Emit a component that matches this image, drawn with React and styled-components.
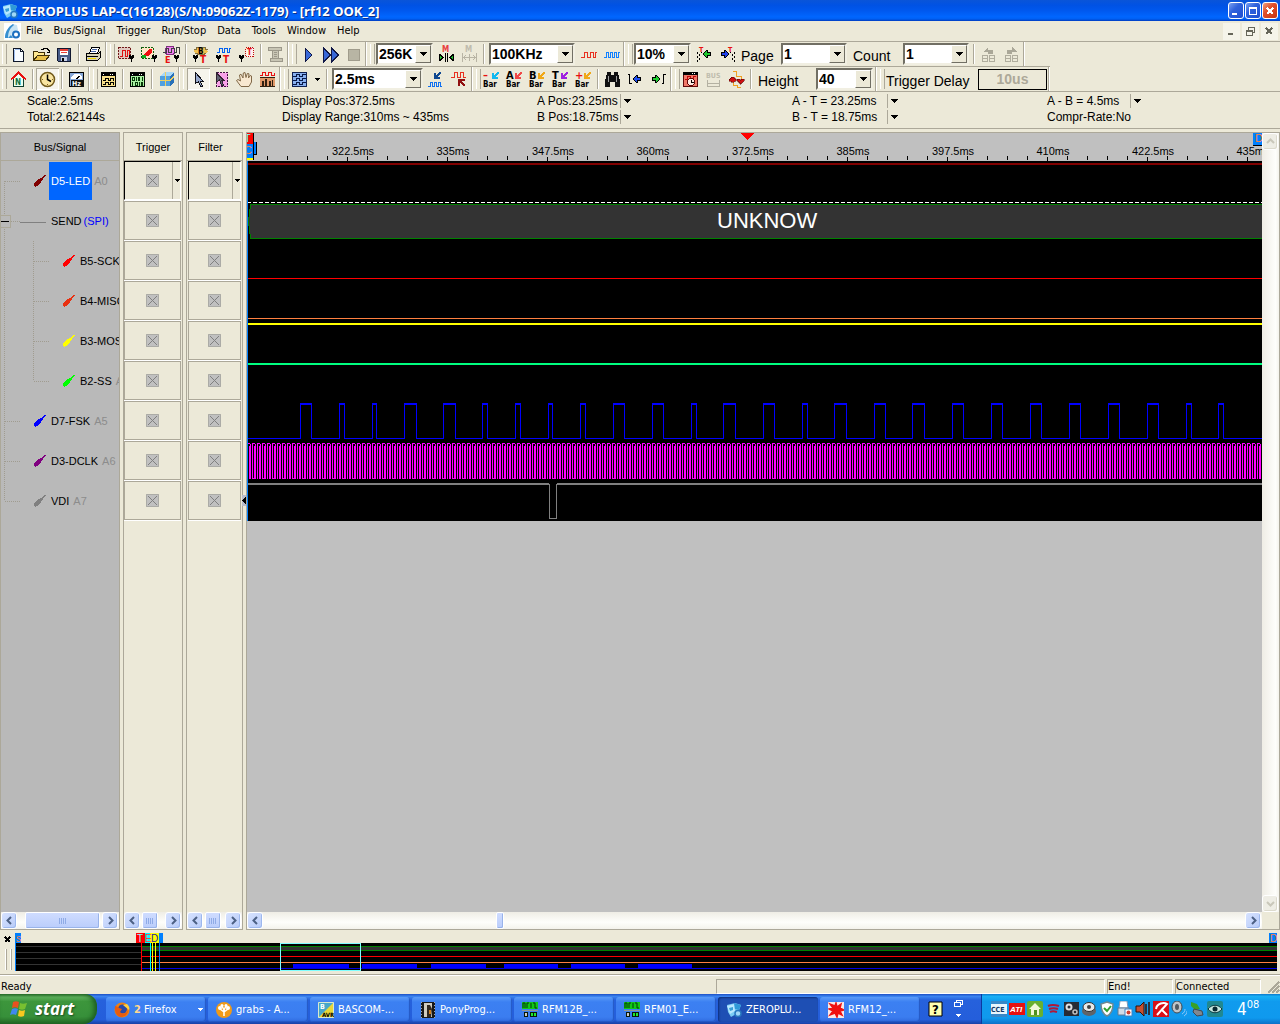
import React from 'react'
import styled, { createGlobalStyle, css } from 'styled-components'

const ui = '"DejaVu Sans Condensed", Tahoma, sans-serif'
const sans = '"Liberation Sans", Arial, sans-serif'

const face = '#ece9d8'
const shadow = '#aca899'

const GlobalStyle = createGlobalStyle`
  * { box-sizing: border-box; }
  body {
    margin: 0;
    background: ${face};
    color: #000;
    font-family: ${ui};
    font-size: 11px;
    overflow: hidden;
  }
  button { font: inherit; color: inherit; padding: 0; margin: 0; border: 0; background: none; }
  svg { display: block; flex: none; }
`

const Screen = styled.div`
  display: flex;
  flex-direction: column;
  height: 100vh;
`

/* ---------- title and menu ---------- */

const TitleBar = styled.header`
  display: flex;
  align-items: center;
  height: 21px;
  padding: 0 2px;
  background: linear-gradient(#0a55d8, #0052e4 25%, #0058ee 50%, #0066ff 80%, #0060f4 90%, #003cc0);
  color: #fff;
`
const Title = styled.h1`
  flex: 1;
  margin: 0 0 0 4px;
  font-family: "Open Sans", "Noto Sans", sans-serif;
  font-size: 13px;
  font-weight: 700;
  line-height: 20px;
  white-space: nowrap;
  text-shadow: 1px 1px 0 #0a2f8a;
`
const CaptionButton = styled.button`
  display: flex;
  align-items: center;
  justify-content: center;
  width: 16px;
  height: 17px;
  margin-left: 1px;
  border: 1px solid #fff;
  border-radius: 3px;
  background: ${p => p.$close ? 'linear-gradient(135deg, #f0a080, #e0502c 40%, #c83410)' : 'linear-gradient(135deg, #7ba0f0, #2f62dc 40%, #1f4fd0)'};
`
const MenuBar = styled.nav`
  display: flex;
  align-items: center;
  height: 20px;
  padding: 0 2px 0 4px;
`
const MenuItem = styled.button`
  height: 18px;
  padding: 0 6px 0 5px;
  line-height: 18px;
`
const Spacer = styled.span`
  flex: 1;
`
const ChildButton = styled.button`
  display: flex;
  align-items: center;
  justify-content: center;
  width: 17px;
  height: 17px;
  margin-left: 2px;
  background: #f5f4ea;
`

/* ---------- tool bars ---------- */

const ToolBar = styled.div`
  display: flex;
  align-items: center;
  width: ${p => p.$fit ? 'fit-content' : 'auto'};
  height: 25px;
  border-top: 1px solid ${shadow};
  font-family: ${sans};
  font-size: 14px;
`
const Grip = styled.span`
  align-self: stretch;
  width: ${p => p.$first ? '7px' : '9px'};
  border-left: ${p => p.$first ? '0' : `1px solid ${shadow}`};
  box-shadow: ${p => p.$first ? 'none' : 'inset 1px 0 #fff'};
  &::after {
    content: '';
    display: block;
    width: 3px;
    height: 20px;
    margin: 2px 0 0 ${p => p.$first ? '2px' : '4px'};
    border-left: 1px solid #fff;
    border-right: 1px solid ${shadow};
  }
`
const Divider = styled.span`
  width: 2px;
  height: 20px;
  margin: 0 2px;
  border-left: 1px solid ${shadow};
  border-right: 1px solid #fff;
`
const EndLine = styled.span`
  align-self: stretch;
  width: 2px;
  border-left: 1px solid ${shadow};
  border-right: 1px solid #fff;
`
const Tool = styled.button`
  display: flex;
  align-items: center;
  justify-content: center;
  flex: none;
  width: ${p => p.$thin ? '13px' : '23px'};
  height: 22px;
  ${p => p.$pressed && css`
    background: #f6f4ec;
    box-shadow: inset 1px 1px ${shadow}, inset -1px -1px #fff;
  `}
`
const Combo = styled.label`
  position: relative;
  flex: none;
  width: ${p => p.$width}px;
  height: 22px;
  margin: 0 2px;
`
const ComboSelect = styled.select`
  appearance: none;
  display: block;
  width: 100%;
  height: 22px;
  padding: 0 0 0 1px;
  border: 2px solid;
  border-color: #716f64 #f1efe2 #f1efe2 #716f64;
  border-radius: 0;
  background: #fff;
  color: #000;
  font: bold 14px/18px ${sans};
`
const ComboArrow = styled.span`
  position: absolute;
  top: 2px;
  right: 2px;
  display: flex;
  align-items: center;
  justify-content: center;
  width: 16px;
  height: 18px;
  background: ${face};
  border: 1px solid;
  border-color: #fff #716f64 #716f64 #fff;
  pointer-events: none;
`
const ToolText = styled.span`
  width: ${p => p.$width}px;
  padding: 3px 0 0 ${p => p.$pad || 2}px;
  line-height: 18px;
  white-space: nowrap;
`
const DelayInput = styled.input`
  width: 69px;
  height: 21px;
  margin: 0 1px 0 6px;
  padding: 0;
  border: 1px solid #000;
  background: ${face};
  color: ${shadow};
  font: bold 14px/18px ${sans};
  text-align: center;
`

const Info = styled.section`
  display: grid;
  grid-template-columns: repeat(5, 1fr);
  height: 38px;
  padding-right: 5px;
  border-top: 1px solid ${shadow};
  border-bottom: 1px solid ${shadow};
  font-family: ${sans};
  font-size: 12px;
  line-height: 16px;
`
const InfoCell = styled.div`
  padding: 1px 0 0 27px;
`
const InfoLine = styled.div`
  display: flex;
  align-items: center;
  white-space: nowrap;
`
const InfoText = styled.span`
  width: ${p => p.$width ? `${p.$width}px` : 'auto'};
`
const InfoDrop = styled.button`
  height: 14px;
  padding: 0 3px;
  border-left: 1px solid ${shadow};
`

/* ---------- panes ---------- */

const Workspace = styled.main`
  position: relative;
  flex: 1;
  display: grid;
  grid-template-columns: 120px 60px 57px minmax(0, 1fr);
  gap: 3px;
  min-height: 0;
  padding-top: 3px;
`
const Pane = styled.section`
  display: flex;
  flex-direction: column;
  min-width: 0;
  border: 1px solid ${shadow};
  background: ${p => p.$bg || face};
  overflow: hidden;
`
const PaneHeader = styled.h2`
  height: 28px;
  margin: 0;
  padding-right: ${p => p.$shift ? '8px' : '0'};
  border-bottom: 1px solid ${shadow};
  font-family: ${sans};
  font-size: 11px;
  font-weight: normal;
  line-height: 28px;
  text-align: center;
`
const PaneBody = styled.div`
  position: relative;
  flex: 1;
  min-height: 0;
`
const TreeLines = styled.svg`
  position: absolute;
  left: 0;
  top: 0;
`
const SignalRow = styled.div`
  position: relative;
  display: flex;
  align-items: center;
  height: 40px;
  padding-left: ${p => p.$level ? '62px' : '33px'};
  font-family: ${sans};
  font-size: 11px;
  white-space: nowrap;
`
const SignalName = styled.span`
  flex: none;
  margin-left: 3px;
  padding: 0 2px;
  line-height: 38px;
  ${p => p.$selected && css`
    background: #0066ff;
    color: #fff;
  `}
`
const Channel = styled.span`
  flex: none;
  padding-left: 2px;
  color: #8c8c8c;
`
const Protocol = styled.span`
  color: #0000ff;
`
const Cell = styled.button`
  display: flex;
  align-items: center;
  justify-content: center;
  position: relative;
  width: ${p => p.$width}px;
  height: 39px;
  margin: 0 1px 1px ${p => p.$inset ? '1px' : '0'};
  border: 1px solid ${shadow};
  box-shadow: 0 1px #fff;
  ${p => p.$active && css`
    border-color: #000 #fff #fff #000;
  `}
`
const CellDrop = styled.span`
  position: absolute;
  right: 0;
  top: 0;
  bottom: 0;
  display: flex;
  align-items: center;
  justify-content: flex-end;
  width: 8px;
  border-left: 1px solid ${shadow};
`

const ScrollBar = styled.div`
  display: flex;
  flex: 1;
  height: 17px;
  padding-right: 1px;
  background: linear-gradient(#efede5, #fefefb 60%, #f4f3ec);
`
const VScrollBar = styled.div`
  display: flex;
  flex-direction: column;
  justify-content: space-between;
  width: 17px;
  background: linear-gradient(90deg, #efede5, #fefefb 80%, #f4f3ec);
`
const ScrollButton = styled.button`
  flex: none;
  display: flex;
  align-items: center;
  justify-content: center;
  width: 16px;
  height: 17px;
  border: 1px solid #fff;
  border-radius: 3px;
  background: ${p => p.$off ? '#eeede5' : 'linear-gradient(135deg, #d6e2ff, #b8cbf8)'};
  box-shadow: inset -1px -1px ${p => p.$off ? '#dcdacd' : '#9db8ee'};
`
const ScrollThumb = styled.div`
  flex: none;
  display: flex;
  align-items: center;
  justify-content: center;
  width: ${p => p.$width}px;
  height: 17px;
  margin-left: ${p => p.$offset};
  border: 1px solid #fff;
  border-radius: 2px;
  background: linear-gradient(#cfdcff, #bacdfb);
  box-shadow: inset -1px -1px #98b3ea;
`
const ScrollRow = styled.div`
  display: flex;
  flex: none;
  height: 17px;
`
const Corner = styled.span`
  width: 17px;
  background: ${face};
`
const WaveArea = styled.div`
  display: flex;
  flex: 1;
  min-height: 0;
`
const WaveCanvas = styled.div`
  flex: 1;
  min-width: 0;
  overflow: hidden;
`
const SplitMark = styled.span`
  position: absolute;
  left: 242px;
  top: 366px;
  width: 4px;
  height: 11px;
  background: #b8bccc;
`

/* ---------- overview and status ---------- */

const Overview = styled.section`
  display: flex;
  flex: none;
  height: 45px;
  padding: 3px 3px 0 0;
  border-bottom: 1px solid ${shadow};
`
const OverviewHandle = styled.div`
  display: flex;
  flex-direction: column;
  align-items: center;
  gap: 6px;
  width: 15px;
  padding-top: 3px;
`
const HandleGrip = styled.span`
  width: 6px;
  height: 21px;
  border: solid #fff;
  border-width: 0 1px;
  background: ${face};
  box-shadow: 1px 0 ${shadow}, inset 1px 0 ${shadow};
`
const OverviewChart = styled.div`
  flex: 1;
  min-width: 0;
  overflow: hidden;
`
const StatusBar = styled.footer`
  display: flex;
  flex: none;
  align-items: stretch;
  gap: 2px;
  height: 19px;
  padding: 3px 0 0 1px;
  border-top: 1px solid #fff;
`
const StatusText = styled.span`
  flex: 716;
  line-height: 15px;
`
const StatusPane = styled.span`
  flex: ${p => p.$grow ? '388' : 'none'};
  width: ${p => p.$width ? `${p.$width}px` : 'auto'};
  border: 1px solid;
  border-color: ${shadow} #fff #fff ${shadow};
  line-height: 14px;
`

/* ---------- task bar ---------- */

const TaskBar = styled.footer`
  display: flex;
  flex: none;
  align-items: stretch;
  height: 30px;
  background: linear-gradient(#1c4fc4, #3b84f0 8%, #2661dc 20%, #245edb 85%, #1941a5);
  color: #fff;
`
const StartButton = styled.button`
  display: flex;
  flex: none;
  align-items: center;
  gap: 6px;
  width: 97px;
  margin-right: 9px;
  padding-left: 10px;
  border-radius: 0 12px 14px 0;
  background: linear-gradient(#2f7a30, #5fb25d 10%, #3d963c 25%, #37903a 75%, #256b27);
  box-shadow: inset -3px 0 5px #1c5c20;
  font-family: "Open Sans", sans-serif;
  font-size: 17px;
  font-weight: bold;
  font-style: italic;
  line-height: 26px;
  text-shadow: 1px 1px 2px #1a4a1c;
`
const TaskButton = styled.button`
  display: flex;
  flex: none;
  align-items: center;
  gap: 4px;
  width: 100px;
  height: 25px;
  margin: 3px 2px 0 0;
  padding: 0 3px 0 8px;
  border-radius: 3px;
  background: ${p => p.$active ? '#1e4fb4' : 'linear-gradient(#5a9bf8, #3c80f2 20%, #3b7df0 80%, #2f6ade)'};
  box-shadow: ${p => p.$active ? 'inset 1px 1px 2px #0e2f7c' : 'inset -1px -1px 1px #2458c4'};
  white-space: nowrap;
`
const TaskCount = styled.b`
  margin-right: -1px;
  color: #ffd890;
`
const LangArea = styled.div`
  display: flex;
  flex: 1;
  align-items: center;
  gap: 10px;
  padding-left: 6px;
`
const Tray = styled.div`
  display: flex;
  flex: none;
  align-items: center;
  gap: 2px;
  width: 299px;
  padding-left: 9px;
  border-left: 1px solid #0b3aa0;
  background: linear-gradient(#0d78cc, #19b0f6 8%, #109bee 25%, #0f99ee 80%, #0c70c8);
`
const Clock = styled.time`
  display: flex;
  margin-left: 12px;
  font-size: 17px;
  line-height: 18px;
`
const ClockMinutes = styled.span`
  font-size: 11px;
  line-height: 10px;
`

/* ---------- drawings ---------- */

const Ico = ({ children, w = 19, h = 20 }) => (
  <svg width={w} height={h} viewBox={`0 0 ${w} ${h}`} shapeRendering="crispEdges" fill="none" aria-hidden="true">{children}</svg>
)
const Glyph = ({ x, y, c = '#000', s = 8, children }) => (
  <text x={x} y={y} fill={c} fontSize={s} fontWeight="bold" fontFamily="DejaVu Sans Condensed">{children}</text>
)
const Down = ({ c = '#000' }) => (
  <svg width="7" height="4" viewBox="0 0 7 4" shapeRendering="crispEdges" aria-hidden="true"><path d="M0 0h7v1h-1v1h-1v1h-1v1h-1v-1h-1v-1h-1v-1h-1z" fill={c} /></svg>
)
const SmallDown = () => (
  <svg width="5" height="3" viewBox="0 0 5 3" shapeRendering="crispEdges" aria-hidden="true"><path d="M0 0h5v1h-1v1h-1v1h-1v-1h-1v-1h-1z" /></svg>
)
const Clip = ({ x, y = 11 }) => (
  <path d={`M${x} ${y}h2v1h1v-1h2v3h-1v1h-1v3h-1v-3h-1v-1h-1z`} fill="#000" />
)
// arrow head filling a 7x7 corner, pointing down and left
const CornerArrow = ({ x, y, c }) => (
  <path d={`M${x} ${y}h2v2h1v-1h1v-1h1v-1h2v2h-1v1h-1v1h-1v1h2v2h-6z`} fill={c} />
)
const BarIcon = ({ mark, c, a }) => (
  <Ico>
    <Glyph x={1} y={10} c={c} s={11}>{mark}</Glyph>
    <CornerArrow x={10} y={4} c={a} />
    <Glyph x={1} y={18} s={8}>Bar</Glyph>
  </Ico>
)
const ArrowLeft = ({ x, y, c }) => (
  <>
    <path d={`M${x} ${y + 4}h1v-1h1v-1h1v-1h1v-1h2v2h3v4h-3v2h-2v-1h-1v-1h-1v-1h-1v-1h-1z`} fill="#000" />
    <path d={`M${x + 1} ${y + 4}h1v-1h1v-1h1v-1h1v2h3v2h-3v2h-1v-1h-1v-1h-1v-1h-1z`} fill={c} />
  </>
)
const ArrowRight = ({ x, y, c }) => (
  <g transform={`translate(${x + 9} 0) scale(-1 1)`}><ArrowLeft x={0} y={y} c={c} /></g>
)

const icons = {
  file: <Ico><path d="M4.500 4.500h7l3 3v10h-10z" fill="#f8fcff" stroke="#101828" /><path d="M11.500 4.500v3h3" stroke="#101828" /><path d="M5.500 5.500v11M5.500 5.500h5" stroke="#a0c0f0" /></Ico>,
  open: <Ico><path d="M1.500 16.500v-9h4l1 1h6v3" fill="#ffe890" stroke="#403008" /><path d="M1.500 16.500l4-5h12l-4 5z" fill="#e8c048" stroke="#403008" /><path d="M9 5.500h2l1-1h3l2 2v2M15 8.500h3" stroke="#000" /></Ico>,
  save: <Ico><path d="M2.500 4.500h13v13h-12l-1-1z" fill="#485c88" stroke="#101830" /><path d="M5 5h8v6h-8z" fill="#fff" /><path d="M5 5h8v2h-8zM6 8h6v1h-6z" fill="#e84038" /><path d="M6 13h6v4h-6z" fill="#c8d0e8" /><path d="M7 14h2v3h-2z" fill="#000" /></Ico>,
  print: <Ico><path d="M5.500 9.500l2-6h8l-2 6z" fill="#fff" stroke="#000" /><path d="M8 5.500h5M7 7.500h5" stroke="#4868a8" /><path d="M2.500 9.500h12l2-2v6l-3 3h-11z" fill="#d8d4b8" stroke="#000" /><path d="M2 12.500h12M3 16.500h10" stroke="#000" strokeWidth="1" /><path d="M4 14h8v1h-8z" fill="#f0d800" /></Ico>,
  sample: <Ico><path d="M2 3h13v12h-13z" fill="#e0c8c0" /><path d="M2.500 3.500h12v11h-12z" stroke="#701818" strokeDasharray="2 1" /><path d="M4 12.500h2v-6h3v6h2v-6h2v6" stroke="#e01010" /><Clip x={13} /></Ico>,
  property: <Ico><path d="M2 3h13v12h-13z" fill="#ffe8c8" /><path d="M2.500 3.500h12v11h-12z" stroke="#106010" strokeDasharray="2 1" /><path d="M5 11l2-3l4-3h2v3l-4 4h-4z" fill="#f01010" /><path d="M3 11h4v3h-4z" fill="#10b020" /><Clip x={13} /></Ico>,
  bus: <Ico><path d="M4 2h7v2h1v5h-1v1h-7v-1h-1v-5h1z" fill="#f080f0" stroke="#803080" /><path d="M1 8.500h3v-4h2v4h3v-4h3v4h2v-5h3v6" stroke="#404040" /><Glyph x={3} y={19} c="#e81010" s={9}>E</Glyph><Clip x={12} /></Ico>,
  eye: <Ico><path d="M2 7l4-3h7l4 3l-4 4h-7z" fill="#f0c050" /><path d="M3 5.500h2v-2h9v2h3M4 9.500h2v1h7v-1h2" stroke="#807040" /><Glyph x={7} y={10}>B</Glyph><Clip x={2} /><Glyph x={9} y={19} c="#e81010" s={10}>T</Glyph></Ico>,
  trigWave: <Ico><path d="M3 8.500h2v-4h3v4h2v-4h3v4h2v-4h2" stroke="#0060f0" /><Clip x={2} /><Glyph x={9} y={19} c="#e81010" s={10}>T</Glyph></Ico>,
  trigBox: <Ico><path d="M8.500 3.500h8v9h-8z" fill="#fff0ec" stroke="#c01010" strokeDasharray="1 1" /><Glyph x={10} y={11} c="#e81010">T</Glyph><Clip x={2} /></Ico>,
  scroll: <Ico><path d="M2 3h14v4h-3v7h4v4h-13v-4h2v-7h-4z" fill="#c8c5b4" /><path d="M2.500 3.500h13v3h-13zM6.500 7v7M12.500 7v7M4.500 14.500h12v3h-12zM8 8.500h3M8 10.500h3M8 12.500h3" stroke="#9c988a" /></Ico>,
  play: <Ico><path d="M7 4l7 7l-7 7z" fill="#3868d8" stroke="#101848" /></Ico>,
  ff: <Ico><path d="M2.500 4l7 7l-7 7zM10.500 4l7 7l-7 7z" fill="#3868d8" stroke="#101848" /></Ico>,
  stop: <Ico><path d="M4 5h12v12h-12z" fill="#b8b5a4" /><path d="M4.500 5.500h11v11h-11z" stroke="#a09c8c" /></Ico>,
  memory: <Ico><Glyph x={5} y={8} c="#e84040">M</Glyph><path d="M8.500 9v9M10.500 9v9" stroke="#000" /><path d="M2 10h2v1h1v1h1v1h1v1h-1v1h-1v1h-1v1h-2zM17 10h-2v1h-1v1h-1v1h-1v1h1v1h1v1h1v1h2z" fill="#000" /><path d="M3 12h1v1h1v1h-1v1h-1zM16 12h-1v1h-1v1h1v1h1z" fill="#20c030" /></Ico>,
  memoryOff: <Ico><Glyph x={5} y={8} c="#c0bcae">M</Glyph><path d="M2.500 9v9M16.500 9v9M9.500 10v7M4 13.500h11M6 11l-2 2.500l2 2.500M13 11l2 2.500l-2 2.500" stroke="#b8b4a4" /></Ico>,
  waveRed: <Ico><path d="M2 13.500h3v-5h3v5h3v-5h3v5h2v-5h2" stroke="#e83020" /></Ico>,
  waveBlue: <Ico><path d="M2 13.500h2v-5h2v5h2v-5h2v5h2v-5h2v5h2v-5h2" stroke="#1080ff" /></Ico>,
  goLeft: <Ico><Glyph x={4} y={8} c="#e81010" s={7}>T</Glyph><path d="M2.500 8v2M4.500 10v2M2.500 12v2M4.500 14v2M2.500 16v2M6.500 8v1" stroke="#000" /><ArrowLeft x={7} y={6} c="#20c830" /></Ico>,
  goRight: <Ico><Glyph x={10} y={8} c="#e81010" s={7}>T</Glyph><path d="M12.500 8v1M14.500 10v2M16.500 8v2M16.500 12v2M14.500 14v2M16.500 16v2" stroke="#000" /><ArrowRight x={3} y={6} c="#2040e8" /></Ico>,
  pagePrev: <Ico><path d="M4 8l5-5v3h5v4h-5v-2z" fill="#aaa798" /><path d="M3.500 11.500h5v6h-5zM10.500 11.500h5v6h-5zM3 14.500h6M10 14.500h6" stroke="#b0ad9e" /></Ico>,
  pageNext: <Ico><path d="M15 8l-5-5v3h-5v4h5v-2z" fill="#aaa798" /><path d="M3.500 11.500h5v6h-5zM10.500 11.500h5v6h-5zM3 14.500h6M10 14.500h6" stroke="#b0ad9e" /></Ico>,
  home: <Ico><path d="M4 9l5.500-5l5.500 5v9h-11z" fill="#e8fff0" /><path d="M4.500 9v8.500h10v-8.500" stroke="#104030" /><path d="M2 10.500l7.500-7l7.500 7" stroke="#e81010" strokeWidth="2" /><Glyph x={6} y={16} c="#107040">N</Glyph></Ico>,
  clock: <svg width="19" height="20" viewBox="0 0 19 20" aria-hidden="true"><circle cx="9.500" cy="10.500" r="7" fill="#f8e4a0" stroke="#705818" strokeWidth="1.500" /><path d="M9.500 5.500v5l3.500 2" fill="none" stroke="#000" strokeWidth="1.500" /><path d="M4 10.500h1M14 10.500h1M9.500 15v1" stroke="#806020" /></svg>,
  hertz: <Ico><path d="M2.500 3.500h14v14h-14z" fill="#88a8d8" stroke="#000" /><path d="M4 10v-2l3-3h5l3 3v2z" fill="#fff" /><path d="M9.500 10l3-3" stroke="#000" /><path d="M4 11h13v7h-13z" fill="#101010" /><Glyph x={5} y={17} c="#fff" s={7}>Hz</Glyph></Ico>,
  wavePanel: <Ico><path d="M2.500 3.500h14v14h-14z" fill="#f8e088" stroke="#000" /><path d="M2 3h15v4h-15z" fill="#000" /><path d="M4 5h1v1h-1zM11 5h1v1h-1zM13 5h1v1h-1z" fill="#fff" /><path d="M4 11.500h2v-2h3v2h2v-2h3v2M4 15.500h2v-2h3v2h2v-2h3v2" stroke="#000" /></Ico>,
  listPanel: <Ico><path d="M2.500 3.500h14v14h-14z" fill="#a8f0a0" stroke="#000" /><path d="M2 3h15v4h-15z" fill="#000" /><path d="M4 5h1v1h-1zM11 5h1v1h-1zM13 5h1v1h-1z" fill="#fff" /><path d="M4.500 8.500h2v3h-2zM8.500 8v4M10.500 8.500h1v3h-1zM14.500 8v4M4.500 13v4M7.500 13.500h2v3h-2zM11.500 13v4M13.500 13.500h1v3h-1z" stroke="#083808" /></Ico>,
  cube: <Ico><path d="M3 7l4-4h10v10l-4 4h-10z" fill="#50a0e0" /><path d="M3 7l4-4h10l-4 4z" fill="#a8d8f8" /><path d="M13 7l4-4v10l-4 4z" fill="#2870b8" /><path d="M8.500 3v14M3 11.500h10l4-4" stroke="#f0d060" /></Ico>,
  pointer: <Ico><path d="M6.500 3.500v11l3-2l2 5h2l-2-5h3z" fill="#98a8cc" stroke="#101018" /></Ico>,
  select: <Ico><path d="M4.500 3.500h11v14h-11z" fill="#f8a0e8" stroke="#401040" strokeDasharray="2 1" /><path d="M4.500 4v9l3-2l2 5h2l-2-5h2z" fill="#606070" stroke="#302030" /></Ico>,
  hand: <svg width="19" height="20" viewBox="0 0 19 20" aria-hidden="true"><path d="M6 17.500L1.500 11.500l1.500-1L5.500 12L4.500 6l1.500-.8L8 9l.3-5L10 3.500l1 5L12.300 4.500l1.700.3L13.500 9l1.500-2.500 1.500.5V13l-2.500 4.500z" fill="#f8e8d0" stroke="#806848" /></svg>,
  stats: <Ico><path d="M2 9h15v9h-15z" fill="#e09868" /><path d="M2 6.500h2v-3h3v3h3v-3h3v3h3v-3" stroke="#e81010" /><path d="M2 8h15v1h-15zM4 12h2v5h-2zM7 10h2v7h-2zM11 12h2v5h-2zM14 11h1v6h-1zM2 17h15v1h-15z" fill="#302010" /></Ico>,
  grid: <Ico><path d="M2.500 3.500h14v14h-14z" fill="#88b0f0" stroke="#102050" /><path d="M3 7.500h3v-2h3v2h3v-2h4M3 11.500h3v-2h3v2h3v-2h4M3 15.500h3v-2h3v2h3v-2h4" stroke="#081848" /></Ico>,
  zoomIn: <Ico><path d="M1 17.500h2v-4h2v4h2v-4h2v4h2v-4h2v4h2" stroke="#1070f0" /><CornerArrow x={7} y={4} c="#104890" /></Ico>,
  zoomOut: <Ico><path d="M1 8.500h3v-5h3v5h3v-5h3v5h3" stroke="#e83020" /><path d="M8 10h7v2h-3v1h1v1h1v1h1v2h-2v-1h-1v-1h-1v-1h-1v3h-2z" fill="#901010" /></Ico>,
  barMinus: <BarIcon mark="–" c="#e81010" a="#10b8f0" />,
  barA: <BarIcon mark="A" c="#000" a="#f04848" />,
  barB: <BarIcon mark="B" c="#000" a="#f0a818" />,
  barT: <BarIcon mark="T" c="#000" a="#a020e0" />,
  barPlus: <BarIcon mark="+" c="#e81010" a="#f0a818" />,
  binoculars: <Ico><path d="M4 3h4v3h3v-3h4v3h1l1 8v4h-5v-5h-5v5h-5v-4l1-8h1z" fill="#101010" /><path d="M5.500 7v6M13.500 7v6" stroke="#a0a0a0" /></Ico>,
  prevEdge: <Ico><path d="M2 5.500h1.500v9h2" stroke="#000" /><ArrowLeft x={6} y={6} c="#2050f0" /></Ico>,
  nextEdge: <Ico><path d="M13 14.500h1.500v-9h2" stroke="#000" /><ArrowRight x={3} y={6} c="#20d030" /></Ico>,
  delay: <Ico><path d="M2.500 3.500h14v14h-14z" fill="#f07868" stroke="#600808" /><path d="M2 3h15v3h-15z" fill="#000" /><path d="M11 4h1v1h-1zM13 4h1v1h-1z" fill="#fff" /><path d="M4 10.500h2v-3h3v3h3v-3h3" stroke="#c00808" /><circle cx="10" cy="13" r="3.500" fill="#ffe8e0" stroke="#600808" /><path d="M10.500 11v2h2" stroke="#000" /></Ico>,
  busOff: <Ico><Glyph x={2} y={9} c="#c0bdae" s={7}>BUS</Glyph><path d="M3.500 11v6h12v-6M3 14.500h13" stroke="#b4b1a2" /></Ico>,
  swap: <Ico><path d="M6 2.500h3v5h5v2M6 12v4h4v2h4" stroke="#f0a020" /><path d="M2 10h1v-1h1v-1h3v1h1v1h1v2h-2v1h-3v-1h-2zM10 10h3v1h1v-1h3v2h-1v1h-1v1h-1v1h-1v-1h-1v-1h-1v-1h-1z" fill="#d01010" stroke="#500" strokeWidth=".5" /></Ico>,
}

const AppLogo = () => (
  <svg width="16" height="16" viewBox="0 0 16 16" aria-hidden="true">
    <path d="M1 3l8-2 6 2-3 8-7 4-3-5z" fill="#7accf4" />
    <path d="M1 4l7-2 1 7-5 3z" fill="#b8e8ff" />
    <path d="M3 6l4-1 0 3-3 1z" fill="#38a0d8" />
    <path d="M8 1l7 2-2 5-4-1z" fill="#2f9ad8" />
    <circle cx="12" cy="11.500" r="3" fill="#a0d8f8" stroke="#2878c0" strokeWidth="1.500" />
  </svg>
)
const DocLogo = () => (
  <svg width="17" height="17" viewBox="0 0 17 17" aria-hidden="true">
    <path d="M0 0h17v17H0z" fill="#fff" />
    <path d="M1 15C1 9 4 4 9 1l4 1 1 5-6 3-1 5z" fill="#c8e4f4" />
    <path d="M1 15C1 9 4 4 9 1l1 1C6 5 4 9 4 15z" fill="#3890d0" />
    <path d="M4 15h5l-2-3z" fill="#3890d0" />
    <circle cx="12" cy="11.500" r="3" fill="#fff" stroke="#1c70c0" strokeWidth="2" />
  </svg>
)
const Probe = ({ color }) => (
  <svg width="12" height="12" viewBox="0 0 12 12" shapeRendering="crispEdges" aria-hidden="true">
    <path d="M11 0h1v1h-1v1h-1v1h-1v2h-1v1h-1v2h-1v1h-1v1h-1v1h-2v1h-1v-1h-1v-3h1v-1h1v-1h1v-1h1v-1h2v-1h2v-1h1v-1h1v-1h1z" fill={color} />
  </svg>
)
const DontCare = () => (
  <svg width="13" height="13" viewBox="0 0 13 13" aria-hidden="true">
    <path d="M.5.5h12v12h-12z" fill="#c0c0c0" stroke="#808080" strokeDasharray="1 1" />
    <path d="M2 2l9 9M11 2l-9 9" stroke="#808080" />
  </svg>
)
const Chevron = ({ d, c = '#4d6185' }) => (
  <svg width="9" height="9" viewBox="0 0 9 9" fill="none" stroke={c} strokeWidth="2" aria-hidden="true"><path d={d} /></svg>
)
const LEFT = 'M6 1L2.500 4.500L6 8'
const RIGHT = 'M3 1l3.500 3.500L3 8'
const ThumbGrip = () => (
  <svg width="8" height="6" viewBox="0 0 8 6" shapeRendering="crispEdges" aria-hidden="true"><path d="M.5 0v6M2.500 0v6M4.500 0v6M6.500 0v6" stroke="#8fabe6" /></svg>
)

/* ---------- data ---------- */

const menus = ['File', 'Bus/Signal', 'Trigger', 'Run/Stop', 'Data', 'Tools', 'Window', 'Help']

const signals = [
  { name: 'D5-LED', ch: 'A0', color: '#800000', selected: true },
  { name: 'SEND', protocol: '(SPI)' },
  { name: 'B5-SCK', color: '#ff0000', level: 1 },
  { name: 'B4-MISO', color: '#e83010', level: 1 },
  { name: 'B3-MOSI', color: '#ffff00', level: 1 },
  { name: 'B2-SS', ch: 'A4', color: '#00ff00', level: 1 },
  { name: 'D7-FSK', ch: 'A5', color: '#0000ff' },
  { name: 'D3-DCLK', ch: 'A6', color: '#800080' },
  { name: 'VDI', ch: 'A7', color: '#808080' },
]

const ticks = ['322.5ms', '335ms', '347.5ms', '360ms', '372.5ms', '385ms', '397.5ms', '410ms', '422.5ms', '435ms']

// rising and falling edge of every FSK pulse
const pulses = [
  [53, 64], [92, 97], [125, 129], [157, 169], [196, 208], [235, 240], [268, 273], [301, 305],
  [333, 338], [366, 377], [405, 416], [444, 449], [476, 488], [516, 527], [555, 560], [587, 599],
  [627, 638], [665, 677], [705, 716], [744, 755], [783, 794], [822, 833], [861, 872], [900, 911],
  [939, 944], [971, 976],
]
const fskPath = pulses.reduce((d, [a, b]) => `${d}H${a}.5V242.5H${b}.5V277.5`, 'M1 277.5') + 'H4000'

const bursts = [[278, 56], [347, 55], [416, 55], [489, 54], [556, 54], [623, 54]]

const ImageIcon = ({ kind }) => {
  const art = {
    firefox: <><circle cx="8" cy="8" r="7.500" fill="#f08010" /><circle cx="8.500" cy="7" r="4.500" fill="#2848a8" /><path d="M1 4c2 0 3 1 4 2l3 1-2 3c3 3 7 1 8-2 0 5-4 7-7 7S0 11 1 4z" fill="#e85c10" /><path d="M9 3l4-1c2 2 3 4 2 6z" fill="#ffd040" /></>,
    grabs: <><circle cx="8" cy="8" r="8" fill="#f09a18" /><path d="M8 14V8M8 10L4 7M8 10l4-3M8 8L6 4M8 8l2-4" stroke="#fff" strokeWidth="1.500" /><circle cx="4" cy="6" r="2" fill="#fff" /><circle cx="12" cy="6" r="2" fill="#fff" /><circle cx="6" cy="3.500" r="1.500" fill="#fff" /><circle cx="10" cy="3.500" r="1.500" fill="#fff" /></>,
    bascom: <><path d="M0 0h16v16H0z" fill="#e8d838" /><path d="M0 0h16L0 16z" fill="#48a8c8" /><path d="M.5.5h15v15H.5z" fill="none" stroke="#d8e8d0" /><Glyph x={2} y={7} c="#fff" s={7}>B</Glyph><Glyph x={4} y={15} s={6}>AVR</Glyph></>,
    pony: <><path d="M1 0h14v16H1z" fill="#181818" /><path d="M4 1h8v14H4z" fill="#d0ccc0" /><path d="M7 3h3l2 4-1 8H7z" fill="#302820" /><path d="M9 8h2v4H9z" fill="#d08020" /><path d="M1.500 0v16M14.500 0v16" stroke="#a8a8a8" strokeDasharray="1 2" /></>,
    rfm: <><path d="M0 0h16v7H0z" fill="#10c818" /><path d="M1 6V1h2v5M5 6V1h2M9 1v5M11 1h2v5h2" fill="none" stroke="#043808" /><path d="M0 8h16v1H0z" fill="#909890" /><path d="M2 10h4v5H2zM8 10h7v5H8z" fill="#081808" /><path d="M3 11h2v3H3z" fill="#c8c8c8" /><path d="M9 11h2v3H9zM12 11h2v3h-2z" fill="#20e830" /></>,
    splat: <><path d="M0 0h16v16H0z" fill="#f8e8e8" /><path d="M8 1l1 4 4-3-1 4 4 2-4 1 2 4-4-2-1 4-2-4-5 2 3-4-4-2 4-1-3-4 5 2z" fill="#f01010" stroke="#f01010" strokeWidth="1.500" /></>,
    help: <><path d="M1 1h13v14H1z" fill="#ffffb0" stroke="#000" /><Glyph x={4} y={13} s={13}>?</Glyph></>,
    ccc: <><path d="M0 0h16v16H0z" fill="#e8f4fc" /><path d="M0 0h16v3H0zM0 13h16v3H0z" fill="#3888c8" /><Glyph x={0} y={11} c="#103868" s={7}>CCE</Glyph></>,
    ati: <><path d="M0 2h16v12H0z" fill="#e81010" /><text x="1" y="11" fill="#fff" fontSize="8" fontWeight="bold" fontStyle="italic" fontFamily="Liberation Sans">ATI</text></>,
    house: <><rect width="16" height="16" rx="2" fill="#68b030" /><path d="M8 2l6 6h-2v6H4V8H2z" fill="#f0f8d8" /><path d="M7 9h3v5H7z" fill="#509020" /></>,
    radio: <path d="M3 5c4-2 8-1 11 0M4 8c3-1 6-1 9 0M5 11c2-1 4-1 7 0" fill="none" stroke="#b01838" strokeWidth="2" />,
    gears: <><path d="M1 1h15v14H1z" fill="#282c34" /><circle cx="6" cy="6" r="2.500" fill="none" stroke="#e0e0e0" strokeWidth="2" /><circle cx="12" cy="11" r="2" fill="none" stroke="#c0c0c0" strokeWidth="1.500" /></>,
    disk: <><ellipse cx="8" cy="10" rx="7" ry="5" fill="#606468" /><ellipse cx="8" cy="6" rx="6" ry="4.500" fill="#e8e8e8" stroke="#303030" /><circle cx="8" cy="6" r="2" fill="#404040" /></>,
    shield: <><path d="M8 1l6 2c0 6-2 10-6 12C4 13 2 9 2 3z" fill="#fff" stroke="#708890" strokeWidth="1.500" /><path d="M5 7l3 3 4-5" fill="none" stroke="#30a030" strokeWidth="2" /></>,
    printer: <><path d="M3 0h7l1 7H2z" fill="#fff" stroke="#8098b8" /><path d="M1 7h11v7H1z" fill="#d0dce8" stroke="#607890" /><path d="M8 8h7v7H8z" fill="#fff" stroke="#4080c0" /><circle cx="11.500" cy="11.500" r="2" fill="#d04030" /></>,
    speaker: <><path d="M1 5h4l4-4v14l-4-4H1z" fill="#c85030" stroke="#301008" /><path d="M11 3v10M14 1v13" stroke="#301008" strokeWidth="1.500" /></>,
    avira: <><path d="M0 0h16v16H0z" fill="#d81018" /><path d="M3 8c1-6 8-7 11-5L4 14M8 8l6 6" fill="none" stroke="#fff" strokeWidth="2" /></>,
    volume: <><ellipse cx="6" cy="6" rx="5" ry="6" fill="#c0c4c8" stroke="#404850" /><ellipse cx="6" cy="6" rx="2" ry="3" fill="#505860" /><path d="M11 13c2-1 3-3 3-5M13 15c2-1 3-3 3-5" fill="none" stroke="#90c8f8" /></>,
    unplug: <><path d="M2 1l6 2 3 5-5 1-4-4z" fill="#38a028" /><path d="M5 8l8 2 1 4-6 1-4-4z" fill="#808890" stroke="#404850" /></>,
    watch: <><rect width="16" height="16" rx="2" fill="#208890" /><path d="M1 8c4-5 10-5 14 0-4 5-10 5-14 0z" fill="#c8e8e0" stroke="#083840" /><circle cx="8" cy="8" r="2.500" fill="#082830" /></>,
  }
  return <svg width="16" height="16" viewBox="0 0 16 16" aria-hidden="true">{art[kind]}</svg>
}

const trayIcons = ['ccc', 'ati', 'house', 'radio', 'gears', 'disk', 'shield', 'printer', 'speaker', 'avira', 'volume', 'unplug', 'watch']

const tasks = [
  { kind: 'firefox', text: 'Firefox', count: 2 },
  { kind: 'grabs', text: 'grabs - A...' },
  { kind: 'bascom', text: 'BASCOM-...' },
  { kind: 'pony', text: 'PonyProg...' },
  { kind: 'rfm', text: 'RFM12B_...' },
  { kind: 'rfm', text: 'RFM01_E...' },
  { text: 'ZEROPLU...', active: true },
  { kind: 'splat', text: 'RFM12_...' },
]

/* ---------- parts ---------- */

const Tools = ({ names, pressed }) => names.map(n => (
  <Tool key={n} aria-label={n} $pressed={n === pressed}>{icons[n]}</Tool>
))

const Select = ({ label, value, width }) => (
  <Combo $width={width}>
    <ComboSelect aria-label={label} defaultValue={value}><option>{value}</option></ComboSelect>
    <ComboArrow><Down /></ComboArrow>
  </Combo>
)

const Scroll = ({ offset, width, grip }) => (
  <ScrollBar>
    <ScrollButton aria-label="Scroll left"><Chevron d={LEFT} /></ScrollButton>
    <ScrollThumb $offset={offset} $width={width}>{grip && <ThumbGrip />}</ScrollThumb>
    <Spacer />
    <ScrollButton aria-label="Scroll right"><Chevron d={RIGHT} /></ScrollButton>
  </ScrollBar>
)

const InfoValue = ({ text, width }) => (
  <InfoLine>
    <InfoText $width={width}>{text}</InfoText>
    {width && <InfoDrop aria-label="Choose"><Down /></InfoDrop>}
  </InfoLine>
)

const CellPane = ({ title, width, inset }) => (
  <Pane>
    <PaneHeader $shift={inset}>{title}</PaneHeader>
    <PaneBody>
      {signals.map((s, i) => (
        <Cell key={s.name} $width={width} $inset={inset} $active={i === 0} aria-label={`${title} ${s.name}`}>
          <DontCare />
          {i === 0 && <CellDrop><SmallDown /></CellDrop>}
        </Cell>
      ))}
    </PaneBody>
    <ScrollRow><Scroll offset="2px" width={16} grip /></ScrollRow>
  </Pane>
)

const Ruler = () => (
  <svg width="100%" height="28" shapeRendering="crispEdges" fontFamily={sans} fontSize="11">
    {Array.from({ length: 50 }, (_, i) => (
      <path key={i} d={`M${i * 20 + 20}.5 ${i % 5 === 4 ? 24 : 23}v4`} stroke="#000" />
    ))}
    {ticks.map((t, i) => <text key={t} x={106 + i * 100} y="22" textAnchor="middle">{t}</text>)}
    <path d="M494 0h13l-6.500 7z" fill="#ff0000" />
    <path d="M0 0h6v11h-6z" fill="#ff0000" />
    <path d="M0 11h6v14h-6z" fill="#0080ff" />
    <text x="-3" y="9" fill="#80ffff">T</text>
    <text x="-3" y="21" fill="#ff8040">C</text>
    <path d="M6.500 0v27" stroke="#000" />
    <path d="M0 25h6v2h-6z" fill="#ffff00" />
    <path d="M7 9h3v12h-3z" fill="#0080ff" />
    <path d="M9.500 9v12h-3" stroke="#000" fill="none" />
    <path d="M1006 0h9v13h-9z" fill="#0080ff" />
    <text x="1008" y="9" fill="#ff8040">D</text>
    <path d="M1006 12.500h9" stroke="#000" />
  </svg>
)

const Waves = () => (
  <svg width="100%" height="360" shapeRendering="crispEdges" fill="none">
    <defs>
      <pattern id="dclk" width="10" height="36" patternUnits="userSpaceOnUse" y="282">
        <path d="M0 0h3v1h-3zM5 0h3v1h-3zM0 1h1v2h-1zM3 1h1v2h-1zM5 1h1v2h-1zM8 1h1v2h-1z" fill="#ff00ff" />
        <path d="M0 3h1v33h-1zM2 3h2v33h-2zM5 3h1v33h-1zM7 3h2v33h-2zM5 35h3v1h-3z" fill="#ff00ff" />
      </pattern>
    </defs>
    <rect width="100%" height="360" fill="#000" />
    <rect y="2" width="100%" height="2" fill="#800000" />
    <path d="M0 41.500h4000" stroke="#fff" strokeDasharray="4 2" />
    <path d="M3.500 43.500h4000v34h-4000l-2 -17z" fill="#333" stroke="#008000" />
    <text x="470" y="67" fill="#fff" fontFamily={sans} fontSize="22">UNKNOW</text>
    <rect y="117" width="100%" height="1" fill="#ff0000" />
    <rect y="157" width="100%" height="1" fill="#ff8040" />
    <rect y="162" width="100%" height="2" fill="#ffff00" />
    <rect y="202" width="100%" height="2" fill="#00ff80" />
    <path d={fskPath} stroke="#0000ff" />
    {pulses.map(([a, b]) => <rect key={a} x={a + 1} y="243" width={b - a} height="1" fill="#0000ff" />)}
    <rect y="282" width="100%" height="36" fill="url(#dclk)" />
    <path d="M302.500 323v34.500h7v-34.500" stroke="#808080" />
    <path d="M1 322h301v2h-301zM310 322h3000v2h-3000z" fill="#808080" />
    <rect width="1" height="360" fill="#0080ff" />
  </svg>
)

const OverviewPlot = () => (
  <svg width="100%" height="38" shapeRendering="crispEdges" fill="none" fontFamily={sans} fontSize="10">
    <rect y="10" width="100%" height="28" fill="#000" />
    <path d="M0 13.500h127M0 19.500h127M0 25.500h127M0 31.500h127" stroke="#333" />
    <rect x="127" y="14" width="100%" height="3" fill="#333" />
    <path d="M127 13.500h4000M127 17.500h4000" stroke="#008000" />
    <path d="M127 23.500h4000" stroke="#ff0000" />
    <path d="M127 29.500h4000" stroke="#ff8040" />
    <path d="M127 35.500h4000" stroke="#0000e0" />
    {bursts.map(([x, w]) => <rect key={x} x={x} y="31" width={w} height="4" fill="#0000ff" />)}
    <path d="M265.500 10.500h80v27h-80z" stroke="#80ffff" />
    <path d="M0 0h6v10h-6zM143 0h5v10h-5z" fill="#0080ff" />
    <path d="M121 0h9v10h-9z" fill="#ff0000" />
    <path d="M130 0h5v10h-5z" fill="#00ffff" />
    <path d="M135 0h9v10h-9z" fill="#ffff00" />
    <text x="1" y="9" fill="#ff8040">s</text>
    <text x="122" y="9" fill="#80ffff">T</text>
    <text x="130" y="9" fill="#ff4040">E</text>
    <text x="136" y="9" fill="#2020a0">D</text>
    <path d="M.5 10v28M144.500 10v28" stroke="#0080ff" />
    <path d="M126.500 10v28" stroke="#ff0000" />
    <path d="M135.500 10v28" stroke="#00ffff" />
    <path d="M137.500 10v28M140.500 10v28" stroke="#ffff00" />
    <svg x="100%" overflow="visible">
      <path d="M-8 0h8v10h-8z" fill="#0080ff" />
      <text x="-7" y="9" fill="#ff8040">D</text>
    </svg>
  </svg>
)

function App() {
  return (
    <Screen>
      <GlobalStyle />
      <TitleBar>
        <AppLogo />
        <Title>ZEROPLUS LAP-C(16128)(S/N:09062Z-1179) - [rf12 OOK_2]</Title>
        <CaptionButton aria-label="Minimize"><Ico w={10} h={10}><path d="M1 7h5v2h-5z" fill="#fff" /></Ico></CaptionButton>
        <CaptionButton aria-label="Restore"><Ico w={10} h={10}><path d="M1 1h8v8h-8zM2 3v5h6v-5z" fill="#fff" fillRule="evenodd" /></Ico></CaptionButton>
        <CaptionButton aria-label="Close" $close><Ico w={10} h={10}><path d="M2 2l6 6M8 2l-6 6" stroke="#fff" strokeWidth="2" /></Ico></CaptionButton>
      </TitleBar>
      <MenuBar>
        <DocLogo />
        {menus.map(m => <MenuItem key={m}>{m}</MenuItem>)}
        <Spacer />
        <ChildButton aria-label="Minimize document"><Ico w={9} h={9}><path d="M1 6h5v2h-5z" fill="#66665a" /></Ico></ChildButton>
        <ChildButton aria-label="Restore document"><Ico w={9} h={9}><path d="M2.500 3v-2.500h6v5h-2M.5 3.500h6v5h-6zM.5 4.500h6" stroke="#66665a" /></Ico></ChildButton>
        <ChildButton aria-label="Close document"><Ico w={9} h={9}><path d="M1 1l6 6M7 1l-6 6" stroke="#66665a" strokeWidth="2" /></Ico></ChildButton>
      </MenuBar>

      <ToolBar>
        <Grip $first />
        <Tools names={['file', 'open', 'save']} />
        <Divider />
        <Tools names={['print']} />
        <Grip />
        <Tools names={['sample', 'property', 'bus']} />
        <Divider />
        <Tools names={['eye', 'trigWave', 'trigBox']} />
        <Divider />
        <Tools names={['scroll']} />
        <Grip />
        <Tools names={['play', 'ff', 'stop']} />
        <Grip />
        <Select label="Memory depth" value="256K" width={57} />
        <Tools names={['memory', 'memoryOff']} />
        <Divider />
        <Select label="Sampling rate" value="100KHz" width={86} />
        <Tools names={['waveRed', 'waveBlue']} />
        <Grip />
        <Select label="Trigger position" value="10%" width={57} />
        <Tools names={['goLeft', 'goRight']} />
        <ToolText $width={40}>Page</ToolText>
        <Select label="Page" value="1" width={66} />
        <ToolText $width={52} $pad={4}>Count</ToolText>
        <Select label="Count" value="1" width={66} />
        <Divider />
        <Tools names={['pagePrev', 'pageNext']} />
        <EndLine />
      </ToolBar>
      <ToolBar $fit>
        <Grip $first />
        <Tools names={['home']} />
        <Divider />
        <Tools names={['clock']} pressed="clock" />
        <Divider />
        <Tools names={['hertz']} />
        <Grip />
        <Tools names={['wavePanel']} />
        <Divider />
        <Tools names={['listPanel']} />
        <Divider />
        <Tools names={['cube']} />
        <Grip />
        <Tools names={['pointer', 'select', 'hand', 'stats']} pressed="pointer" />
        <Grip />
        <Tools names={['grid']} />
        <Tool $thin aria-label="Grid options"><SmallDown /></Tool>
        <Divider />
        <Select label="Scale" value="2.5ms" width={91} />
        <Tools names={['zoomIn', 'zoomOut']} />
        <Grip />
        <Tools names={['barMinus', 'barA', 'barB', 'barT', 'barPlus']} />
        <Divider />
        <Tools names={['binoculars', 'prevEdge', 'nextEdge']} />
        <Grip />
        <Tools names={['delay', 'busOff', 'swap']} />
        <Divider />
        <ToolText $width={60} $pad={4}>Height</ToolText>
        <Select label="Height" value="40" width={57} />
        <Grip />
        <ToolText as="label" htmlFor="delay" $width={88}>Trigger Delay</ToolText>
        <DelayInput id="delay" defaultValue="10us" disabled />
        <EndLine />
      </ToolBar>

      <Info>
        <InfoCell><InfoValue text="Scale:2.5ms" /><InfoValue text="Total:2.62144s" /></InfoCell>
        <InfoCell><InfoValue text="Display Pos:372.5ms" /><InfoValue text="Display Range:310ms ~ 435ms" /></InfoCell>
        <InfoCell><InfoValue text="A Pos:23.25ms" width={83} /><InfoValue text="B Pos:18.75ms" width={83} /></InfoCell>
        <InfoCell><InfoValue text="A - T = 23.25ms" width={95} /><InfoValue text="B - T = 18.75ms" width={95} /></InfoCell>
        <InfoCell><InfoValue text="A - B = 4.5ms" width={83} /><InfoValue text="Compr-Rate:No" /></InfoCell>
      </Info>

      <Workspace>
        <Pane $bg="#b9b9b9">
          <PaneHeader>Bus/Signal</PaneHeader>
          <PaneBody>
            <TreeLines width="60" height="360" shapeRendering="crispEdges" fill="none">
              <path d="M3.500 20v320M4 20.500h15M10 60.500h9M4 260.500h15M4 300.500h15M4 340.500h15M32.500 80v140M33 100.500h15M33 140.500h15M33 180.500h15M33 220.500h15" stroke="#a09c90" strokeDasharray="1 1" />
              <path d="M-1 54.500h10v12h-10" fill="#b9b9b9" stroke={shadow} />
              <path d="M0 60.500h8" stroke="#000" />
              <path d="M19 61.500h26" stroke="#808080" />
            </TreeLines>
            {signals.map(s => (
              <SignalRow key={s.name} $level={s.level}>
                {s.color ? <Probe color={s.color} /> : <svg width="12" height="12" />}
                <SignalName $selected={s.selected}>{s.name}</SignalName>
                {s.ch && <Channel>{s.ch}</Channel>}
                {s.protocol && <Protocol>{s.protocol}</Protocol>}
              </SignalRow>
            ))}
          </PaneBody>
          <ScrollRow><Scroll offset="8px" width={75} grip /></ScrollRow>
        </Pane>

        <CellPane title="Trigger" width={57} />
        <CellPane title="Filter" width={53} inset />

        <Pane $bg="#c0c0c0">
          <WaveArea>
            <WaveCanvas>
              <Ruler />
              <Waves />
            </WaveCanvas>
            <VScrollBar>
              <ScrollButton $off aria-label="Scroll up"><Chevron d="M1 6l3.500-3.500L8 6" c="#c9c7ba" /></ScrollButton>
              <ScrollButton $off aria-label="Scroll down"><Chevron d="M1 3l3.500 3.500L8 3" c="#c9c7ba" /></ScrollButton>
            </VScrollBar>
          </WaveArea>
          <ScrollRow><Scroll offset="23%" width={8} /><Corner /></ScrollRow>
        </Pane>
        <SplitMark><svg width="4" height="11" shapeRendering="crispEdges"><path d="M4 1v9l-4-4.500z" /></svg></SplitMark>
      </Workspace>

      <Overview>
        <OverviewHandle>
          <Ico w={7} h={7}><path d="M1 1l5 5M6 1l-5 5" stroke="#000" strokeWidth="1.500" /></Ico>
          <HandleGrip />
        </OverviewHandle>
        <OverviewChart><OverviewPlot /></OverviewChart>
      </Overview>
      <StatusBar>
        <StatusText>Ready</StatusText>
        <StatusPane $grow />
        <StatusPane $width={66}>End!</StatusPane>
        <StatusPane $width={86}>Connected</StatusPane>
        <Ico w={17} h={15}><path d="M5 14l11-11M9 14l7-7M13 14l3-3" stroke={shadow} strokeWidth="1.500" /></Ico>
      </StatusBar>

      <TaskBar>
        <StartButton>
          <svg width="19" height="18" viewBox="0 0 19 18" aria-hidden="true">
            <path d="M3 2c2-1 4-1 6 0L8 8C6 7 4 7 2 8z" fill="#e85020" />
            <path d="M10 3c2 1 4 1 7 0l-2 6c-2 1-4 1-6 0z" fill="#78c030" />
            <path d="M2 9c2-1 4-1 6 0l-2 6c-2-1-4-1-6 0z" fill="#4088f0" />
            <path d="M9 10c2 1 4 1 6 0l-1 6c-2 1-4 1-6 0z" fill="#f8c820" />
          </svg>
          start
        </StartButton>
        {tasks.map(t => (
          <TaskButton key={t.text} $active={t.active}>
            {t.kind ? <ImageIcon kind={t.kind} /> : <AppLogo />}
            {t.count && <TaskCount>{t.count}</TaskCount>}
            {t.text}
            {t.count && <><Spacer /><SmallDownWhite /></>}
          </TaskButton>
        ))}
        <LangArea>
          <ImageIcon kind="help" />
          <svg width="9" height="18" viewBox="0 0 9 18" fill="none" shapeRendering="crispEdges" aria-hidden="true">
            <path d="M2.500 2v-1.500h6v4h-2M.5 2.500h6v4h-6z" stroke="#fff" /><path d="M2 14h5l-2.500 3z" fill="#fff" />
          </svg>
        </LangArea>
        <Tray>
          {trayIcons.map(k => <ImageIcon key={k} kind={k} />)}
          <Clock>4<ClockMinutes>08</ClockMinutes></Clock>
        </Tray>
      </TaskBar>
    </Screen>
  )
}

function SmallDownWhite() {
  return <svg width="5" height="3" viewBox="0 0 5 3" shapeRendering="crispEdges" aria-hidden="true"><path d="M0 0h5v1h-1v1h-1v1h-1v-1h-1v-1h-1z" fill="#fff" /></svg>
}

export default App
